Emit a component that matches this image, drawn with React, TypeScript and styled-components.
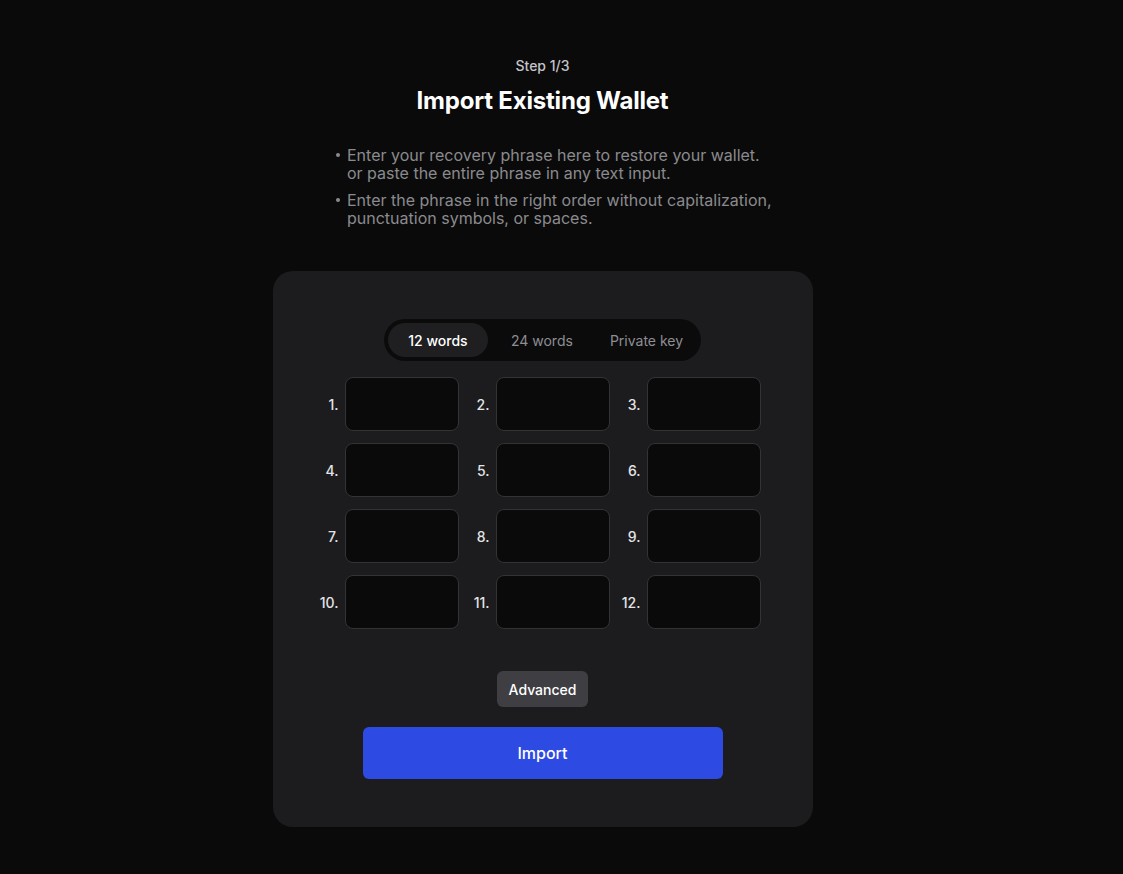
import React, { useState } from 'react'
import styled, { createGlobalStyle } from 'styled-components'

const GlobalStyle = createGlobalStyle`
	html, body {
		margin: 0;
		padding: 0;
		background: #0a0a0a;
	}
	body {
		font-family: Inter, 'Noto Sans', sans-serif;
		color: #fff;
		-webkit-font-smoothing: antialiased;
	}
	* {
		box-sizing: border-box;
	}
`

const Page = styled.div`
	min-height: 874px;
	display: flex;
	flex-direction: column;
	align-items: center;
	padding: 57px 38px 0 0;
`

const Step = styled.div`
	font-size: 14px;
	font-weight: 500;
	color: #c4c4c8;
	line-height: 18px;
`

const Title = styled.h1`
	margin: 11px 0 0;
	font-size: 24px;
	font-weight: 700;
	letter-spacing: -0.2px;
	line-height: 30px;
	color: #fff;
`

const Hints = styled.ul`
	margin: 30px 0 0 25px;
	padding: 0 0 0 14px;
	width: 444px;
	list-style: none;
`

const Hint = styled.li`
	position: relative;
	font-size: 16px;
	line-height: 18px;
	color: #8a8a8f;
	& + & {
		margin-top: 9px;
	}
	&::before {
		content: '';
		position: absolute;
		left: -11px;
		top: 7px;
		width: 4px;
		height: 4px;
		border-radius: 50%;
		background: #8a8a8f;
	}
`

const Card = styled.div`
	margin-top: 44px;
	width: 540px;
	background: #1c1c1e;
	border-radius: 20px;
	padding: 48px 0;
	display: flex;
	flex-direction: column;
	align-items: center;
`

const Tabs = styled.div`
	display: flex;
	gap: 4px;
	padding: 4px;
	background: #0b0b0c;
	border-radius: 21px;
`

const Tab = styled.button<{ $active: boolean }>`
	border: none;
	font-family: inherit;
	height: 34px;
	min-width: 100px;
	padding: 0 14px;
	border-radius: 17px;
	font-size: 14px;
	font-weight: ${(p) => (p.$active ? 500 : 400)};
	color: ${(p) => (p.$active ? '#ffffff' : '#8e8e93')};
	background: ${(p) => (p.$active ? '#1f1f21' : 'transparent')};
	cursor: pointer;
`

const Grid = styled.div`
	margin-top: 16px;
	align-self: flex-start;
	margin-left: 42px;
	display: grid;
	grid-template-columns: repeat(3, auto);
	column-gap: 7px;
	row-gap: 12px;
`

const Cell = styled.label`
	display: flex;
	align-items: center;
	gap: 6px;
`

const Num = styled.span`
	width: 24px;
	text-align: right;
	font-size: 14px;
	font-weight: 500;
	color: #e4e4e7;
`

const WordInput = styled.input`
	width: 114px;
	height: 54px;
	background: #0a0a0a;
	border: 1px solid #333336;
	border-radius: 8px;
	color: #fff;
	font-family: inherit;
	font-size: 14px;
	padding: 0 10px;
	outline: none;
`

const AdvancedButton = styled.button`
	margin-top: 42px;
	height: 36px;
	padding: 0 12px;
	border: none;
	border-radius: 6px;
	background: #3f3f43;
	color: #fff;
	font-family: inherit;
	font-size: 14px;
	font-weight: 500;
	cursor: pointer;
`

const ImportButton = styled.button`
	margin-top: 20px;
	width: 360px;
	height: 52px;
	border: none;
	border-radius: 6px;
	background: #2d4be3;
	color: #fff;
	font-family: inherit;
	font-size: 16px;
	font-weight: 500;
	cursor: pointer;
`

const TABS = ['12 words', '24 words', 'Private key']

export default function App() {
	const [activeTab, setActiveTab] = useState('12 words')

	return (
		<>
			<GlobalStyle />
			<Page>
				<Step>Step 1/3</Step>
				<Title>Import Existing Wallet</Title>
				<Hints>
					<Hint>
						Enter your recovery phrase here to restore your wallet. or paste the entire
						phrase in any text input.
					</Hint>
					<Hint>
						Enter the phrase in the right order without capitalization, punctuation
						symbols, or spaces.
					</Hint>
				</Hints>
				<Card>
					<Tabs>
						{TABS.map((tab) => (
							<Tab key={tab} $active={activeTab === tab} onClick={() => setActiveTab(tab)}>
								{tab}
							</Tab>
						))}
					</Tabs>
					<Grid>
						{Array.from({ length: 12 }, (_, i) => (
							<Cell key={i}>
								<Num>{i + 1}.</Num>
								<WordInput type="text" />
							</Cell>
						))}
					</Grid>
					<AdvancedButton>Advanced</AdvancedButton>
					<ImportButton>Import</ImportButton>
				</Card>
			</Page>
		</>
	)
}
